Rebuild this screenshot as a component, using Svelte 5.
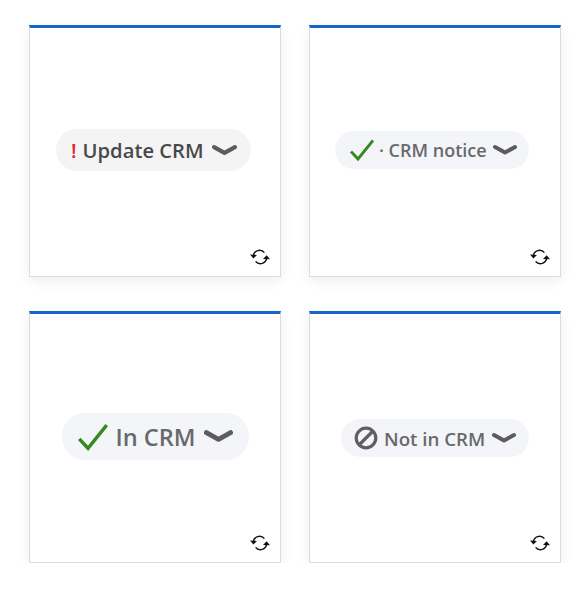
<script>
  const sync = "M3.4 9.4A6.2 6.2 0 0 1 14.4 5.6M16.6 10.6A6.2 6.2 0 0 1 5.6 14.4";
</script>

{#snippet chevron(w)}
  <svg class="chev" width={w} height={w * 0.5} viewBox="0 0 24 12"><path d="M2 3 12 8.5 22 3" /></svg>
{/snippet}

{#snippet check(s)}
  <svg class="check" width={s} height={s} viewBox="0 0 24 24"><path d="M1 13.5 8 21 23 2.5" /></svg>
{/snippet}

{#snippet refresh()}
  <svg class="sync" width="20" height="20" viewBox="0 0 20 20">
    <path class="line" d={sync} />
    <path class="head" d="M0 7.6 3.4 11.6 7 8Z M13 12 16.6 8.2 20 12.2Z" />
  </svg>
{/snippet}

<main class="grid">
  <section class="card">
    <div class="pill one"><span class="bang">!</span><span>Update CRM</span>{@render chevron(25)}</div>
    {@render refresh()}
  </section>
  <section class="card">
    <div class="pill two">{@render check(24)}<span>· CRM notice</span>{@render chevron(24)}</div>
    {@render refresh()}
  </section>
  <section class="card">
    <div class="pill three">{@render check(30)}<span>In CRM</span>{@render chevron(29)}</div>
    {@render refresh()}
  </section>
  <section class="card">
    <div class="pill four">
      <svg class="ban" width="24" height="24" viewBox="0 0 24 24"><circle cx="12" cy="12" r="9.8" /><path d="M5 19 19 5" /></svg>
      <span>Not in CRM</span>{@render chevron(24)}
    </div>
    {@render refresh()}
  </section>
</main>

<style>
  :global(body) { margin: 0; background: #fff; }
  .grid {
    display: grid;
    grid-template-columns: 252px 252px;
    grid-auto-rows: 252px;
    column-gap: 28px;
    row-gap: 34px;
    padding: 25px 0 0 29px;
    font-family: "Open Sans", "Noto Sans", sans-serif;
  }
  .card {
    position: relative;
    box-sizing: border-box;
    display: flex;
    align-items: center;
    justify-content: center;
    background: #fff;
    border: 1px solid #dcdcdc;
    border-top: 3px solid #1566c8;
    box-shadow: 0 4px 12px rgba(0, 0, 0, 0.07);
  }
  .pill {
    display: flex;
    align-items: center;
    box-sizing: border-box;
    background: #f4f5f8;
    color: #68696d;
    font-weight: 600;
    white-space: nowrap;
  }
  .one { width: 195px; height: 42px; border-radius: 21px; padding-left: 15px; margin: -4px 3px 0 0; background: #f4f4f4; color: #48484a; font-size: 20.2px; gap: 6px; }
  .one .chev { margin-left: 2px; }
  .two { width: 194px; height: 38px; border-radius: 19px; padding-left: 15px; margin: -4px 6px 0 0; font-size: 18px; gap: 5px; }
  .two .chev { margin-left: 1px; }
  .three { width: 187px; height: 47px; border-radius: 23px; padding-left: 16px; margin: -3px 0 0 0; font-size: 23.6px; gap: 8px; }
  .three .chev { margin-left: 0; }
  .four { width: 188px; height: 38px; border-radius: 19px; padding-left: 13px; margin: 0; font-size: 18.7px; gap: 6px; }
  .four .chev { margin-left: 1px; }
  .bang { color: #e5222b; }
  .chev { flex: none; }
  .chev path { fill: none; stroke: #5c5c60; stroke-width: 4; stroke-linecap: round; stroke-linejoin: round; }
  .check path { fill: none; stroke: #34891f; stroke-width: 2.8; }
  .check { flex: none; }
  .ban { flex: none; }
  .ban circle, .ban path { fill: none; stroke: #606064; stroke-width: 3.2; }
  .sync { position: absolute; right: 10px; bottom: 9px; }
  .line { fill: none; stroke: #111; stroke-width: 1.5; }
  .head { fill: #111; }
</style>
